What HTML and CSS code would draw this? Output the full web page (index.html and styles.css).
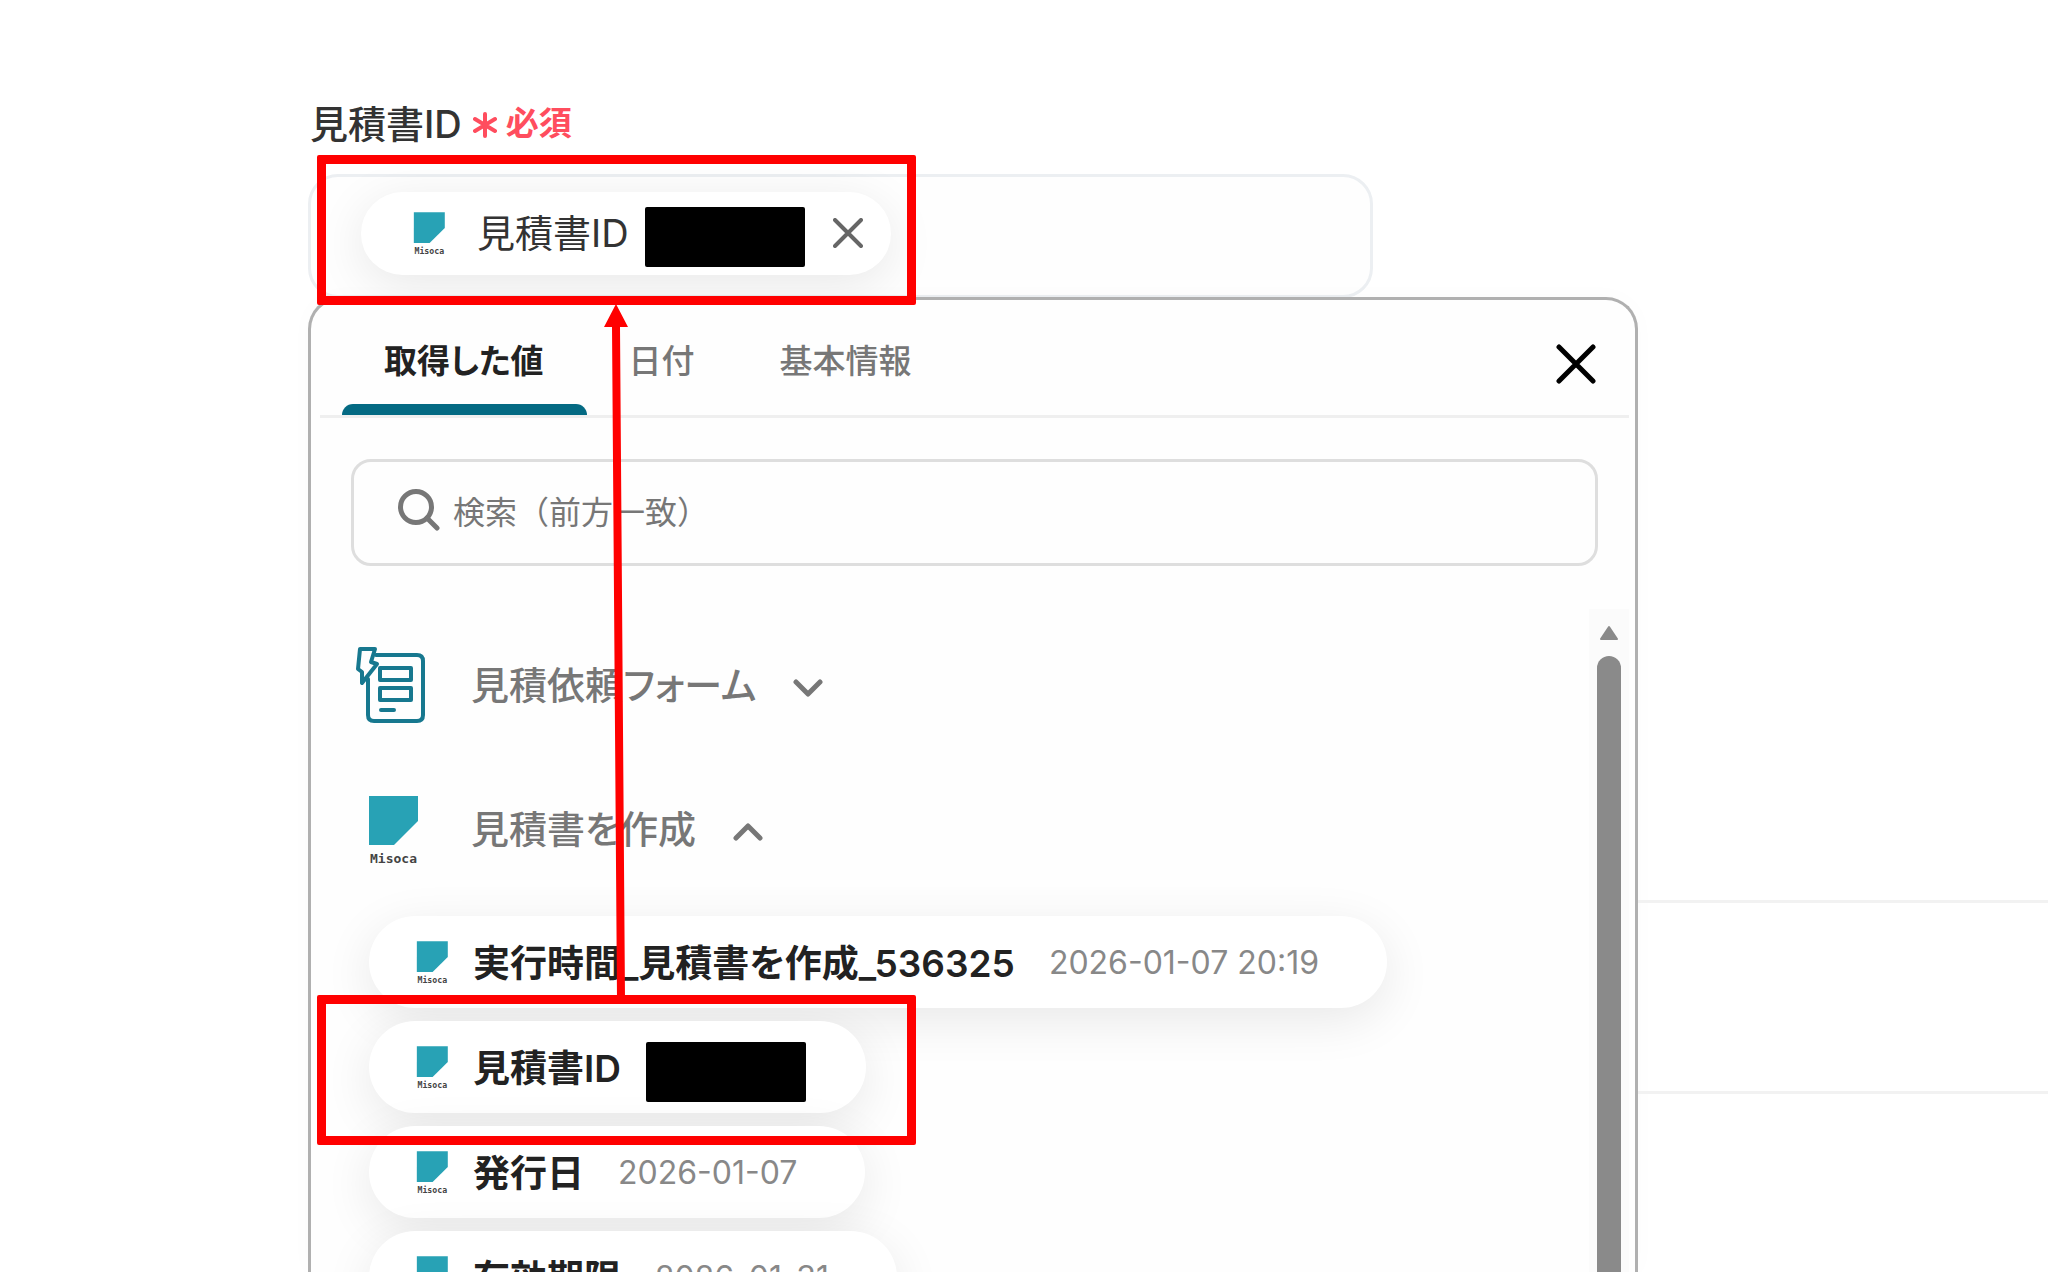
FILE: index.html
```html
<!DOCTYPE html>
<html lang="ja">
<head>
<meta charset="utf-8">
<meta name="viewport" content="width=device-width, initial-scale=1">
<title>見積書ID</title>
<link rel="stylesheet" href="styles.css">
</head>
<body>
<svg class="defs" aria-hidden="true">
  <symbol id="misoca" viewBox="0 0 76 76">
    <path d="M14 5H63V30L39 54H14Z" fill="#28a2b5"/>
    <text class="logo-text" x="38.5" y="72" text-anchor="middle">Misoca</text>
  </symbol>
</svg>
<main class="page">
  <div class="field">
    <div class="field-label" id="quote-label">見積書ID
      <svg class="asterisk" viewBox="0 0 24 26" aria-hidden="true"><path d="M12 2V24M2 7L22 19M22 7L2 19"/></svg>
      <span class="required">必須</span>
    </div>
    <div class="value-box" role="group" aria-labelledby="quote-label">
      <div class="chip">
        <svg class="logo-small" aria-hidden="true"><use href="#misoca"/></svg>
        <span class="chip-name">見積書ID</span>
        <span class="redacted"></span>
        <button class="chip-remove" type="button" aria-label="削除"><svg viewBox="0 0 30 30"><path d="M2 2L28 28M28 2L2 28"/></svg></button>
      </div>
    </div>
  </div>

  <div class="workspace">
    <section class="picker">
      <div class="tabs" role="tablist">
        <button class="tab active" type="button" role="tab" aria-selected="true">取得した値</button>
        <button class="tab" type="button" role="tab">日付</button>
        <button class="tab" type="button" role="tab">基本情報</button>
        <button class="close" type="button" aria-label="閉じる"><svg viewBox="0 0 40 40"><path d="M3 3L37 37M37 3L3 37"/></svg></button>
      </div>
      <label class="search">
        <svg viewBox="0 0 42 42" aria-hidden="true"><circle cx="18" cy="18" r="15.5"/><path d="M29 29L39 39"/></svg>
        <input type="text" placeholder="検索（前方一致）" aria-label="検索（前方一致）">
      </label>
      <div class="results">
        <div class="list">
          <button class="group" type="button" aria-expanded="false">
            <svg class="group-icon" viewBox="0 0 76 76" aria-hidden="true">
              <g class="form-lines">
                <path d="M21 8H62Q68 8 68 14V68Q68 74 62 74H19Q13 74 13 68V32"/>
                <path d="M25 21H56V33H25ZM25 41H56V53H25ZM26 63H39"/>
                <path d="M5 2H20L16 15L22 17L7 36V25L3 22Z"/>
              </g>
            </svg>
            <span class="group-name">見積依頼フォーム</span>
            <svg class="chevron" viewBox="0 0 30 20" aria-hidden="true"><path d="M3 4L15 16L27 4"/></svg>
          </button>
          <button class="group" type="button" aria-expanded="true">
            <svg class="group-icon" aria-hidden="true"><use href="#misoca"/></svg>
            <span class="group-name">見積書を作成</span>
            <svg class="chevron" viewBox="0 0 30 20" aria-hidden="true"><path d="M3 16L15 4L27 16"/></svg>
          </button>
          <ul class="items">
            <li><button class="item" type="button"><svg class="logo-small" aria-hidden="true"><use href="#misoca"/></svg><span class="item-name">実行時間_見積書を作成_536325</span><span class="item-value">2026-01-07 20:19</span></button></li>
            <li><button class="item" type="button"><svg class="logo-small" aria-hidden="true"><use href="#misoca"/></svg><span class="item-name">見積書ID</span><span class="redacted"></span></button></li>
            <li><button class="item" type="button"><svg class="logo-small" aria-hidden="true"><use href="#misoca"/></svg><span class="item-name">発行日</span><span class="item-value">2026-01-07</span></button></li>
            <li><button class="item" type="button"><svg class="logo-small" aria-hidden="true"><use href="#misoca"/></svg><span class="item-name">有効期限</span><span class="item-value">2026-01-31</span></button></li>
          </ul>
        </div>
        <div class="scrollbar" aria-hidden="true">
          <svg viewBox="0 0 20 16"><path d="M10 2L18 14H2Z"/></svg>
          <div class="thumb"></div>
        </div>
      </div>
    </section>
    <div class="backdrop-rows" aria-hidden="true">
      <div class="backdrop-row"></div>
      <div class="backdrop-row"></div>
    </div>
  </div>

  <div class="callout callout-target"></div>
  <div class="callout callout-source"></div>
  <svg class="callout-arrow" viewBox="0 0 30 694" aria-hidden="true"><path d="M15 0L27 23H19L24 694H16L11 23H3Z"/></svg>
</main>
</body>
</html>
```
FILE: styles.css
```css
* { box-sizing: border-box; }

body {
  margin: 0;
  background: #fff;
  color: #333;
  font-family: Inter, "Noto Sans CJK JP", sans-serif;
}

button {
  border: 0;
  padding: 0;
  background: none;
  color: inherit;
  font: inherit;
  cursor: pointer;
}

svg { flex: none; fill: none; stroke-linecap: round; stroke-linejoin: round; }

.defs { display: none; }

.page {
  position: relative;
  display: flex;
  flex-direction: column;
  height: 100vh;
  padding: 93px 0 0 308px;
  overflow: hidden;
}

.field-label {
  display: flex;
  align-items: center;
  height: 56px;
  padding-left: 2px;
  font-size: 38px;
  font-weight: 500;
}
.asterisk { width: 24px; height: 26px; margin: 8px 9px 0 11px; stroke: #ff4d5e; stroke-width: 4; }
.required { color: #ff4d5e; font-size: 33px; font-weight: 700; }

.value-box {
  display: flex;
  align-items: center;
  max-width: 1065px;
  height: 124px;
  margin-top: 25px;
  padding: 0 50px 6px;
  border: 3px solid #eceff2;
  border-radius: 30px;
  background: #fefefe;
}

.chip {
  display: flex;
  align-items: center;
  height: 83px;
  padding: 0 28px 0 44px;
  border-radius: 42px;
  background: #fff;
  box-shadow: 0 10px 50px rgba(0, 0, 0, 0.09);
}
.logo-small { width: 48px; height: 48px; }
.logo-text { fill: #444; font: 700 13px "DejaVu Sans Mono", monospace; }
.chip-name { margin-left: 24px; padding-bottom: 6px; font-size: 38px; }
.redacted { width: 160px; height: 60px; border-radius: 2px; background: #000; }
.chip .redacted { margin: 8px 28px 0 16px; }
.chip-remove { display: flex; }
.chip-remove svg { width: 30px; height: 30px; stroke: #666; stroke-width: 4; }

.workspace { display: flex; flex: 1; min-height: 0; margin-top: -1px; }

.picker {
  display: flex;
  flex-direction: column;
  flex: 0 1 1330px;
  border: 3px solid #b0b0b0;
  border-bottom: 0;
  border-radius: 32px 32px 0 0;
  background: #fefefe;
  box-shadow: 0 0 24px rgba(0, 0, 0, 0.02);
}

.tabs {
  display: flex;
  height: 118px;
  margin: 0 6px 0 9px;
  padding-left: 22px;
  border-bottom: 3px solid #efefef;
}
.tab {
  position: relative;
  padding: 2px 43px 0 42px;
  color: #777;
  font-size: 33px;
  font-weight: 500;
  font-feature-settings: "palt";
}
.tab.active { color: #222; font-weight: 700; }
.tab.active::after {
  content: "";
  position: absolute;
  right: 0;
  bottom: 0;
  left: 0;
  height: 11px;
  border-radius: 11px 11px 0 0;
  background: #046a83;
}
.close { display: flex; align-items: center; margin-left: auto; padding: 12px 33px 0 0; }
.close svg { width: 40px; height: 40px; stroke: #000; stroke-width: 5; }

.search {
  display: flex;
  flex: none;
  align-items: center;
  gap: 13px;
  height: 107px;
  margin: 41px 37px 0 40px;
  padding: 0 44px;
  border: 3px solid #dedede;
  border-radius: 20px;
}
.search svg { width: 42px; height: 42px; margin-bottom: 6px; stroke: #777; stroke-width: 5; }
.search input {
  flex: 1;
  min-width: 0;
  padding: 0;
  border: 0;
  outline: 0;
  background: none;
  color: #333;
  font: 400 32px Inter, "Noto Sans CJK JP", sans-serif;
}
.search input::placeholder { color: #777; opacity: 1; }

.results { display: flex; flex: 1; min-height: 0; margin: 43px 6px 0 0; }
.list { flex: 1; padding: 4px 0 0 44px; overflow: hidden; }

.group {
  display: flex;
  align-items: center;
  width: 100%;
  height: 144px;
  color: #777;
  font-size: 38px;
  font-weight: 500;
  font-feature-settings: "palt";
}
.group-icon { width: 76px; height: 76px; margin-right: 40px; }
.group-name { padding-bottom: 6px; }
.form-lines { stroke: #17788f; stroke-width: 4; }
.chevron { width: 30px; height: 20px; margin: 6px 0 0 37px; stroke: #777; stroke-width: 5; }

.items {
  display: flex;
  flex-direction: column;
  gap: 13px;
  margin: 15px 0 0 14px;
  padding: 0;
  list-style: none;
}
.item {
  display: flex;
  align-items: center;
  height: 92px;
  padding: 0 68px 0 39px;
  border-radius: 46px;
  background: #fff;
  box-shadow: 0 12px 50px rgba(0, 0, 0, 0.09);
}
.item-name { margin-left: 17px; padding-bottom: 2px; color: #222; font-size: 37px; font-weight: 600; font-feature-settings: "palt"; }
.item-value { margin-left: 34px; color: #888; font-size: 32px; }
.item .redacted { margin: 10px -8px 0 25px; }

.scrollbar {
  display: flex;
  flex-direction: column;
  align-items: center;
  gap: 15px;
  width: 40px;
  padding-top: 16px;
  background: #fbfbfb;
}
.scrollbar svg { width: 20px; height: 16px; fill: #8a8a8a; stroke: #8a8a8a; stroke-width: 2; }
.thumb { flex: 1; width: 24px; border-radius: 12px 12px 0 0; background: #8a8a8a; }

.backdrop-rows { flex: 1; padding-top: 603px; }
.backdrop-row { height: 191px; border-top: 3px solid #f2f2f2; }

.callout { position: absolute; left: 317px; width: 599px; height: 150px; border: 9px solid #f00; border-radius: 2px; }
.callout-target { top: 155px; }
.callout-source { top: 995px; }
.callout-arrow { position: absolute; top: 304px; left: 601px; width: 30px; height: 694px; fill: #f00; }
```
